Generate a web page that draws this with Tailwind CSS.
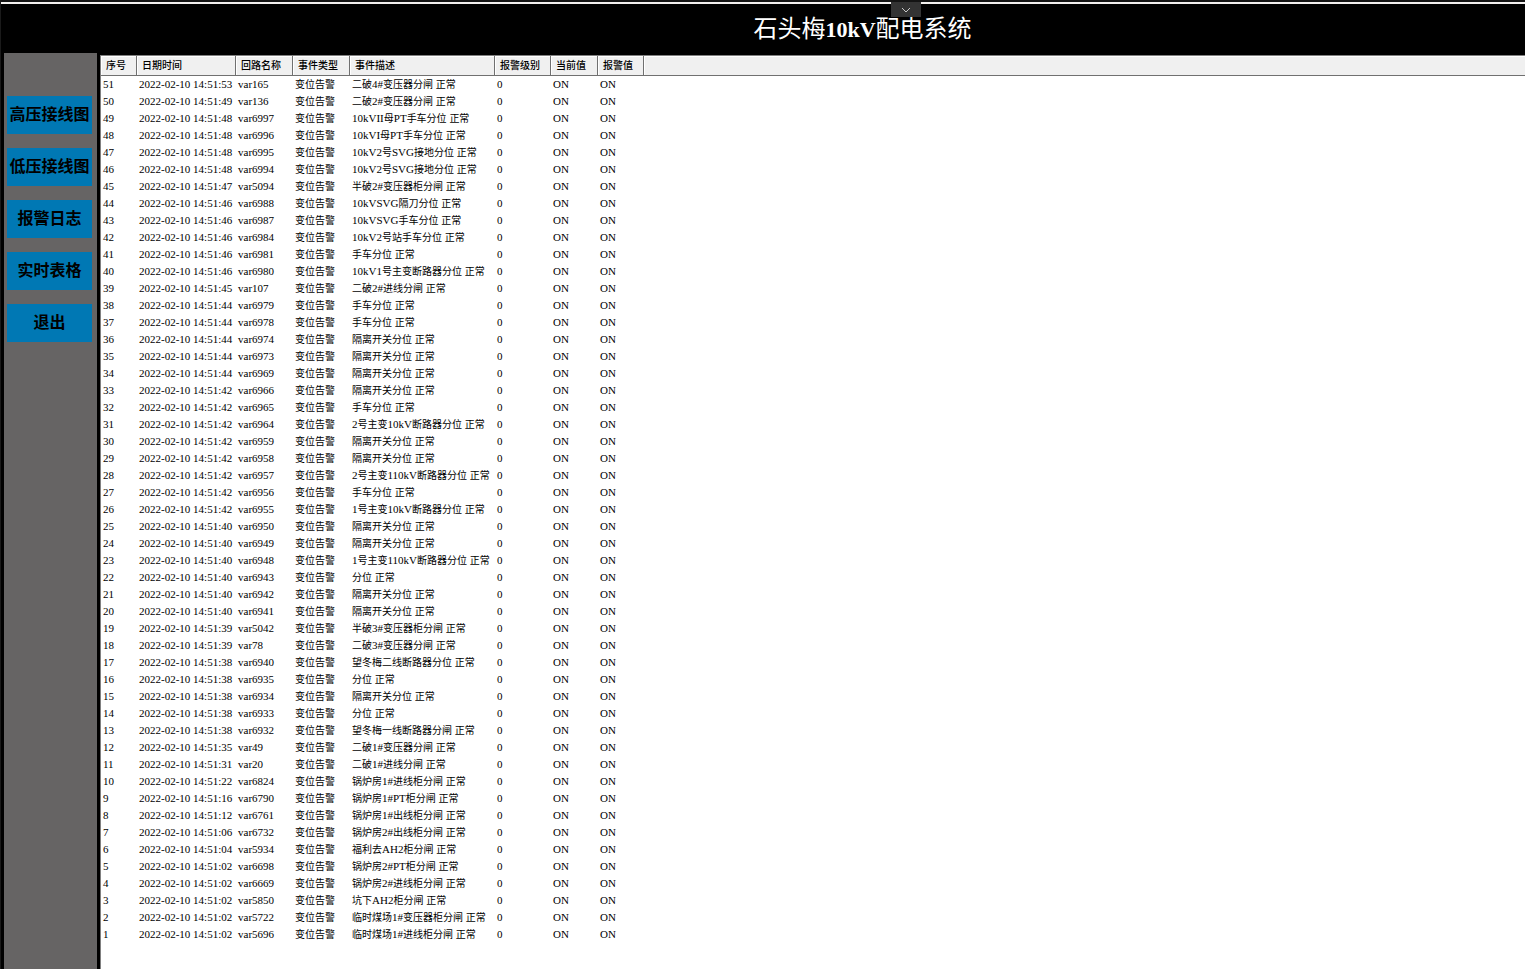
<!DOCTYPE html>
<html lang="zh-CN">
<head>
  <meta charset="UTF-8" />
  <title>石头梅10kV配电系统</title>
  <meta name="viewport" content="width=device-width, initial-scale=1" />
  <script src="https://cdn.jsdelivr.net/npm/@tailwindcss/browser@4"></script>
</head>
<body class="min-h-screen flex flex-col bg-black text-black border-l border-[#1a1a1a] font-['Liberation_Serif','Noto_Sans_CJK_SC',serif]">
  <!-- Title bar -->
  <header class="relative h-[53px] shrink-0 border-t-2 border-[#141414]">
    <div class="h-[2px] bg-[#f2f0ee]"></div>
    <h1 class="pl-[199px] pt-[7px] text-center text-[24px] leading-[36px] text-white"><span>石头梅</span><span class="text-[22px] font-bold">10kV</span><span>配电系统</span></h1>
    <button aria-label="展开" class="absolute left-[890px] top-0 w-[30px] h-[15px] flex items-center justify-center bg-[#333333]">
      <svg class="w-[10px] h-[6px]" viewBox="0 0 10 6" fill="none" stroke="#c8c8c8" stroke-width="1"><path d="M1 1l4 4 4-4" /></svg>
    </button>
  </header>

  <div class="flex flex-grow">
    <!-- Sidebar -->
    <nav class="w-[93px] shrink-0 ml-[3px] pt-[43px] pl-[3px] pr-[5px] flex flex-col gap-[14px] bg-[#666464] text-[16px] leading-[38px] font-bold">
      <button class="h-[38px] bg-[#0078b4] whitespace-nowrap">高压接线图</button>
      <button class="h-[38px] bg-[#0078b4] whitespace-nowrap">低压接线图</button>
      <button class="h-[38px] bg-[#0078b4] whitespace-nowrap">报警日志</button>
      <button class="h-[38px] bg-[#0078b4] whitespace-nowrap">实时表格</button>
      <button class="h-[38px] bg-[#0078b4] whitespace-nowrap">退出</button>
    </nav>

    <!-- Alarm log -->
    <main class="flex-grow min-w-0 ml-[3px] mt-[2px] border-l border-t border-[#808080] bg-white">
      <table class="w-full table-fixed border-separate border-spacing-0 whitespace-nowrap text-left">
        <colgroup>
          <col class="w-[36px]" /><col class="w-[99px]" /><col class="w-[57px]" /><col class="w-[57px]" />
          <col class="w-[145px]" /><col class="w-[56px]" /><col class="w-[47px]" /><col class="w-[46px]" /><col />
        </colgroup>
        <thead class="bg-[#f0f0f0] text-[10px] leading-[19px]">
          <tr>
            <th class="p-0 pl-[5px] font-medium border-r border-b border-[#707070] shadow-[inset_1px_1px_0_#ffffff]">序号</th>
            <th class="p-0 pl-[5px] font-medium border-r border-b border-[#707070] shadow-[inset_1px_1px_0_#ffffff]">日期时间</th>
            <th class="p-0 pl-[5px] font-medium border-r border-b border-[#707070] shadow-[inset_1px_1px_0_#ffffff]">回路名称</th>
            <th class="p-0 pl-[5px] font-medium border-r border-b border-[#707070] shadow-[inset_1px_1px_0_#ffffff]">事件类型</th>
            <th class="p-0 pl-[5px] font-medium border-r border-b border-[#707070] shadow-[inset_1px_1px_0_#ffffff]">事件描述</th>
            <th class="p-0 pl-[5px] font-medium border-r border-b border-[#707070] shadow-[inset_1px_1px_0_#ffffff]">报警级别</th>
            <th class="p-0 pl-[5px] font-medium border-r border-b border-[#707070] shadow-[inset_1px_1px_0_#ffffff]">当前值</th>
            <th class="p-0 pl-[5px] font-medium border-r border-b border-[#707070] shadow-[inset_1px_1px_0_#ffffff]">报警值</th>
            <td class="p-0 border-b border-[#707070] shadow-[inset_1px_1px_0_#ffffff]"></td>
          </tr>
        </thead>
        <tbody id="log"></tbody>
      </table>
    </main>
  </div>

<script>
  /* time | loop | description, newest first */
  const events = `
14:51:53|var165|二破4#变压器分闸
14:51:49|var136|二破2#变压器分闸
14:51:48|var6997|10kVII母PT手车分位
14:51:48|var6996|10kVI母PT手车分位
14:51:48|var6995|10kV2号SVG接地分位
14:51:48|var6994|10kV2号SVG接地分位
14:51:47|var5094|半破2#变压器柜分闸
14:51:46|var6988|10kVSVG隔刀分位
14:51:46|var6987|10kVSVG手车分位
14:51:46|var6984|10kV2号站手车分位
14:51:46|var6981|手车分位
14:51:46|var6980|10kV1号主变断路器分位
14:51:45|var107|二破2#进线分闸
14:51:44|var6979|手车分位
14:51:44|var6978|手车分位
14:51:44|var6974|隔离开关分位
14:51:44|var6973|隔离开关分位
14:51:44|var6969|隔离开关分位
14:51:42|var6966|隔离开关分位
14:51:42|var6965|手车分位
14:51:42|var6964|2号主变10kV断路器分位
14:51:42|var6959|隔离开关分位
14:51:42|var6958|隔离开关分位
14:51:42|var6957|2号主变110kV断路器分位
14:51:42|var6956|手车分位
14:51:42|var6955|1号主变10kV断路器分位
14:51:40|var6950|隔离开关分位
14:51:40|var6949|隔离开关分位
14:51:40|var6948|1号主变110kV断路器分位
14:51:40|var6943|分位
14:51:40|var6942|隔离开关分位
14:51:40|var6941|隔离开关分位
14:51:39|var5042|半破3#变压器柜分闸
14:51:39|var78|二破3#变压器分闸
14:51:38|var6940|望冬梅二线断路器分位
14:51:38|var6935|分位
14:51:38|var6934|隔离开关分位
14:51:38|var6933|分位
14:51:38|var6932|望冬梅一线断路器分闸
14:51:35|var49|二破1#变压器分闸
14:51:31|var20|二破1#进线分闸
14:51:22|var6824|锅炉房1#进线柜分闸
14:51:16|var6790|锅炉房1#PT柜分闸
14:51:12|var6761|锅炉房1#出线柜分闸
14:51:06|var6732|锅炉房2#出线柜分闸
14:51:04|var5934|福利去AH2柜分闸
14:51:02|var6698|锅炉房2#PT柜分闸
14:51:02|var6669|锅炉房2#进线柜分闸
14:51:02|var5850|坑下AH2柜分闸
14:51:02|var5722|临时煤场1#变压器柜分闸
14:51:02|var5696|临时煤场1#进线柜分闸`.trim().split("\n").map(l => l.split("|"));

  /* latin runs are set one size up from the chinese text */
  const mixed = s => s.replace(/[\x20-\x7e]+/g, m => `<span class="text-[11px]">${m}</span>`);

  const cell = s => `<td class="h-[17px] p-0 pl-[2px] text-[10px] leading-[17px]">${mixed(s)}</td>`;

  document.querySelector("#log").innerHTML = events.map(([time, loop, desc], i) =>
    "<tr>" + [
      String(events.length - i), "2022-02-10 " + time, loop, "变位告警", desc + " 正常", "0", "ON", "ON"
    ].map(cell).join("") + "<td></td></tr>"
  ).join("");
</script>
</body>
</html>
